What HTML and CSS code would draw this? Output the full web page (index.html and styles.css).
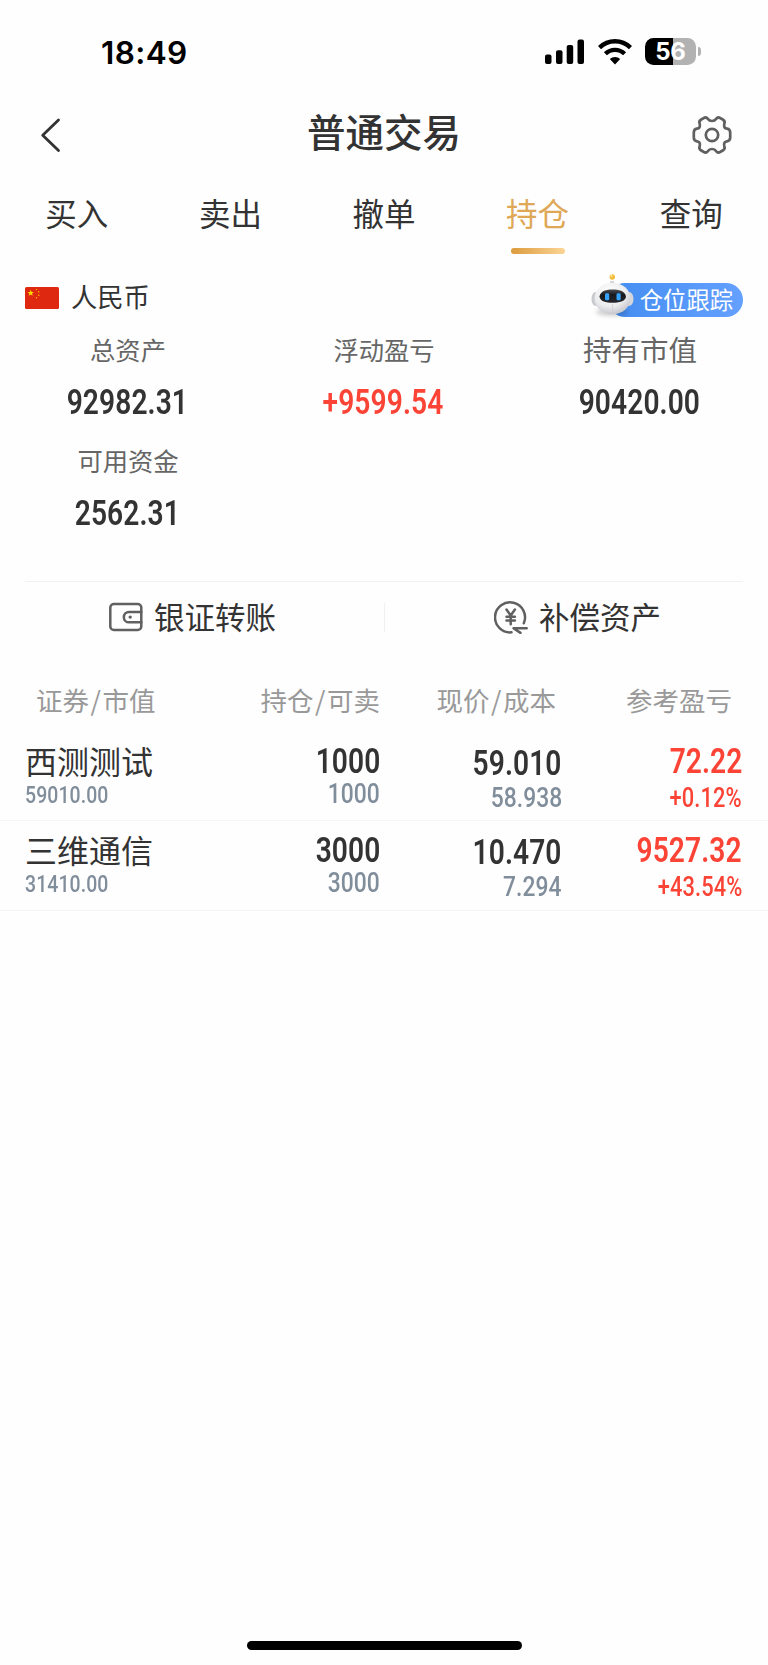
FILE: index.html
```html
<!DOCTYPE html>
<html lang="zh-CN">
<head>
<meta charset="utf-8">
<title>普通交易</title>
<link rel="stylesheet" href="styles.css">
</head>
<body>
<div class="screen">
  <div class="status">
    <span class="time">18:49</span>
    <div class="status-icons">
      <svg class="signal" viewBox="0 0 40 26"><rect x="0" y="15.5" width="6.5" height="9.5" rx="2"/><rect x="11" y="11.3" width="6.5" height="13.700" rx="2"/><rect x="21.7" y="6" width="6.5" height="19" rx="2"/><rect x="32.5" y="0.500" width="6.5" height="24.500" rx="2"/></svg>
      <svg class="wifi" viewBox="0 0 34 26"><path d="M1.500 8.600a22 22 0 0 1 31 0" fill="none" stroke="#000" stroke-width="4.4"/><path d="M7.400 14.800a13.600 13.600 0 0 1 19.200 0" fill="none" stroke="#000" stroke-width="4.2"/><path d="M17 25.4l-5.2-5.3a7.6 7.6 0 0 1 10.4 0z"/></svg>
      <div class="battery"><div class="battery-body">56</div><div class="battery-cap"></div></div>
    </div>
  </div>
  <header class="nav">
    <svg class="back" viewBox="0 0 22 36"><path d="M19.500 3L3.700 18.3L19.500 33.6"/></svg>
    <h1>普通交易</h1>
    <svg class="gear" viewBox="-21 -21 42 42"><path d="M-8.500 -16.800Q-5.800 -18.600 -4 -16Q-2.800 -14 0 -14Q2.800 -14 4 -16Q5.800 -18.600 8.500 -16.800L10.800 -15.500Q13.500 -14 12.300 -11Q11.300 -6.800 15 -6.300Q18.200 -5.800 18.200 -2.500V2.500Q18.200 5.800 15 6.300Q11.300 6.800 12.300 11Q13.500 14 10.800 15.500L8.500 16.800Q5.800 18.600 4 16Q2.800 14 0 14Q-2.800 14 -4 16Q-5.800 18.600 -8.500 16.800L-10.800 15.500Q-13.500 14 -12.300 11Q-11.300 6.800 -15 6.300Q-18.200 5.800 -18.200 2.500V-2.500Q-18.200 -5.800 -15 -6.300Q-11.300 -6.800 -12.300 -11Q-13.500 -14 -10.800 -15.500Z"/><circle r="6.200"/></svg>
  </header>
  <nav class="tabs">
    <span>买入</span><span>卖出</span><span>撤单</span><span class="active">持仓</span><span>查询</span>
  </nav>
  <section class="currency">
    <svg class="flag" viewBox="0 0 34 22"><rect width="34" height="22" rx="1.5" fill="#de2910"/><path fill="#ffde00" d="M5.700 2.700l.850 2.300h2.300L7 6.500l.750 2.300-2.050-1.400-2.050 1.400.750-2.300-1.850-1.500h2.300z"/><g fill="#ffc400"><circle cx="11.5" cy="2.6" r=".7"/><circle cx="13.7" cy="4.8" r=".7"/><circle cx="13.7" cy="8.3" r=".7"/><circle cx="11.5" cy="10.7" r=".7"/></g></svg>
    <span class="currency-name">人民币</span>
    <div class="tracker">
      <span>仓位跟踪</span>
      <svg class="robot" viewBox="0 0 46 48">
        <defs>
          <radialGradient id="head" cx=".42" cy=".3" r=".75"><stop offset="0" stop-color="#fff"/><stop offset=".6" stop-color="#ececee"/><stop offset="1" stop-color="#bfc1c8"/></radialGradient>
          <linearGradient id="visor" x2="0" y2="1"><stop stop-color="#4b4d52"/><stop offset=".4" stop-color="#17191d"/><stop offset="1" stop-color="#26282d"/></linearGradient>
        </defs>
        <ellipse class="shadow" cx="22" cy="40" rx="16" ry="4"/>
        <path d="M19.3 13l1-4h3.6l1.2 4z" fill="#d6d6d8"/>
        <circle cx="22.3" cy="5" r="2.7" fill="#f4bd39"/><circle cx="21.5" cy="4" r="1.1" fill="#ffe9a0"/>
        <ellipse cx="5.5" cy="27" rx="4" ry="7" fill="#c9cacd"/><ellipse cx="39" cy="27" rx="4.500" ry="7" fill="#d5d6da"/>
        <ellipse cx="22.5" cy="26.5" rx="18" ry="15.8" fill="url(#head)"/>
        <path d="M22.5 32v10" stroke="#ccc" stroke-width=".7"/>
        <path d="M9.5 24.5c1-6 7-7 13-7s12.500 1 13.500 7c-.5 5-7 6.300-13.500 6.300s-12.500-1.300-13-6.300z" fill="url(#visor)"/>
        <rect x="15" y="21.300" width="4.200" height="7" rx="1.400" fill="#35a3fb"/><rect x="26.500" y="21.300" width="4.200" height="7" rx="1.400" fill="#35a3fb"/>
      </svg>
    </div>
  </section>
  <section class="stats">
    <div class="stat"><label>总资产</label><b class="num">92982.31</b></div>
    <div class="stat"><label>浮动盈亏</label><b class="num red">+9599.54</b></div>
    <div class="stat"><label class="large">持有市值</label><b class="num">90420.00</b></div>
    <div class="stat"><label>可用资金</label><b class="num">2562.31</b></div>
  </section>
  <section class="actions">
    <div class="action">
      <svg viewBox="0 0 34 34"><rect x="1.300" y="4" width="31" height="26" rx="3.600"/><path d="M32.300 12H20a5 5 0 0 0 0 10.300h12.300"/><circle class="dot" cx="21.200" cy="17.100" r="1.700"/></svg>
      <span>银证转账</span>
    </div>
    <div class="action">
      <svg viewBox="0 0 34 34"><path d="M29.800 23.300A15 15 0 1 0 17.500 32.300M12.500 9.500l4.200 6 4.200-6M12.500 16.800h8.400M12.500 20.600h8.400M16.700 15.500v8.700M32.700 28.300H19.500l7 4.600"/></svg>
      <span>补偿资产</span>
    </div>
  </section>
  <section class="positions">
    <div class="thead"><span>证券<i>/</i>市值</span><span>持仓<i>/</i>可卖</span><span>现价<i>/</i>成本</span><span>参考盈亏</span></div>
    <div class="row">
      <div class="cell name"><strong>西测测试</strong><span class="num tiny">59010.00</span></div>
      <div class="cell qty"><b class="num">1000</b><span class="num small">1000</span></div>
      <div class="cell price"><b class="num">59.010</b><span class="num small">58.938</span></div>
      <div class="cell profit"><b class="num">72.22</b><span class="num small">+0.12%</span></div>
    </div>
    <div class="row">
      <div class="cell name"><strong>三维通信</strong><span class="num tiny">31410.00</span></div>
      <div class="cell qty"><b class="num">3000</b><span class="num small">3000</span></div>
      <div class="cell price"><b class="num">10.470</b><span class="num small">7.294</span></div>
      <div class="cell profit"><b class="num">9527.32</b><span class="num small">+43.54%</span></div>
    </div>
  </section>
  <div class="home-bar"></div>
</div>
</body>
</html>
```
FILE: styles.css
```css
* { box-sizing: border-box; }
body { margin: 0; background: #fefefe; color: #333; font-family: "Noto Sans CJK SC", sans-serif; }
.screen { width: 768px; height: 1665px; display: flex; flex-direction: column; overflow: hidden; }
svg { display: block; flex: none; }

.status { height: 104px; padding: 0 67px 0 101px; display: flex; justify-content: space-between; align-items: center; color: #000; font-family: Inter, sans-serif; }
.time { margin-top: 2px; font-size: 31.500px; font-weight: 600; line-height: 40px; letter-spacing: .4px; }
.status-icons { display: flex; align-items: center; }
.signal { width: 40px; height: 26px; margin-right: 12.500px; }
.wifi { width: 34px; height: 26px; margin-right: 13.500px; }
.battery { display: flex; align-items: center; margin-top: -1px; }
.battery-body { width: 51px; height: 27px; border-radius: 8.500px; background: linear-gradient(90deg, #000 28.500px, #b2b2b2 28.500px); color: #fff; font-size: 24px; line-height: 27px; font-weight: 700; text-align: center; letter-spacing: -.3px; }
.battery-cap { width: 3.500px; height: 9px; margin-left: 1.500px; border-radius: 0 4px 4px 0; background: #b2b2b2; }

.nav { height: 62px; padding: 0 35px 0 39px; display: flex; justify-content: space-between; align-items: center; }
.nav h1 { margin: -10px 0 0 16px; font-size: 38.500px; line-height: 60px; font-weight: 500; }
.back { width: 22px; height: 36px; }
.back path { fill: none; stroke: #333; stroke-width: 2.800; stroke-linecap: round; stroke-linejoin: round; }
.gear { width: 42px; height: 42px; }
.gear * { fill: none; stroke: #606060; stroke-width: 2.700; stroke-linejoin: round; }

.tabs { height: 92px; display: grid; grid-template-columns: repeat(5, 1fr); }
.tabs span { display: flex; flex-direction: column; align-items: center; padding-top: 21px; font-size: 31.500px; line-height: 50px; }
.tabs .active { color: #dfa857; }
.active::after { content: ""; width: 54px; height: 6px; margin-top: 11px; border-radius: 3px; background: linear-gradient(90deg, #dc9b3c, #fbd596); }

.currency { height: 67px; padding: 11px 25px 0; display: flex; align-items: center; }
.flag { width: 34px; height: 22px; margin-top: 1px; }
.currency-name { margin: -2px auto 0 12px; font-size: 26.300px; line-height: 40px; }
.tracker { position: relative; width: 135px; height: 34px; margin-top: 5px; border-radius: 17px; background: linear-gradient(90deg, #438df1, #64a0ff); color: #fff; text-align: right; padding-right: 10px; }
.tracker span { display: block; font-size: 23.300px; line-height: 32px; }
.robot { position: absolute; left: -18px; top: -11px; width: 46px; height: 48px; overflow: visible; }
.shadow { fill: #000; opacity: .18; filter: blur(2px); }

.num { font-family: Roboto, sans-serif; font-weight: 600; font-size: 35px; line-height: 40px; letter-spacing: .1px; display: block; transform: scaleX(.805); }
.red { color: #fb4336; }
.stats { height: 256px; display: grid; grid-template-columns: repeat(3, 256px); grid-auto-rows: 111px; }
.stat { display: flex; flex-direction: column; align-items: center; padding-top: 4px; }
.stat label { height: 54px; font-size: 25.300px; line-height: 40px; color: #666; }
.stat .large { font-size: 28.500px; }
.stat .num { margin-left: -2px; }

.actions { height: 86px; margin: 0 25px; padding-top: 21px; border-top: 1.500px solid #f1f1f1; display: grid; grid-template-columns: 1fr 1fr; }
.action { height: 29px; display: flex; align-items: center; gap: 11px; padding-left: 84px; font-size: 30.500px; line-height: 40px; }
.action + .action { border-left: 1.500px solid #f1f1f1; padding-left: 109px; }
.action svg { width: 34px; height: 34px; margin-top: -1px; }
.action span { margin-top: -4px; }
.action svg * { fill: none; stroke: #606060; stroke-width: 2.500; stroke-linejoin: round; stroke-linecap: round; }
.action svg .dot { fill: #606060; stroke: none; }

.thead { height: 65px; padding: 13px 36px 0; display: grid; grid-template-columns: 160px 184px 176px 1fr; font-size: 26.500px; line-height: 40px; color: #999; }
.thead i { font-style: normal; padding: 0 1.500px; }
.thead span + span { text-align: right; }
.row { height: 89.300px; border-bottom: 1.500px solid #f5f5f5; padding: 0 26px; display: grid; grid-template-columns: 170px 184px 182px 180px; }
.cell { display: flex; flex-direction: column; align-items: flex-end; }
.cell .num { transform-origin: right; line-height: 34px; }
.cell .small { font-size: 27.500px; line-height: 26px; font-weight: 500; color: #808d9b; transform: scaleX(.83); }
.name { align-items: flex-start; padding-top: 5px; }
.name strong { font-weight: 400; font-size: 32px; line-height: 46px; margin-left: -1px; white-space: nowrap; }
.cell .tiny { margin: -1px 0 0 -1px; transform: scaleX(.81); transform-origin: left; font-size: 24px; line-height: 26px; font-weight: 500; color: #808d9b; }
.qty { padding-top: 13px; }
.qty .small { margin-top: 2px; }
.price { padding-top: 15px; }
.price .small { margin-top: 4px; }
.profit { padding-top: 13px; }
.cell.profit .num { color: #fb4336; }
.profit .small { margin-top: 6px; transform: scaleX(.795); }
.home-bar { width: 275px; height: 9px; margin: auto auto 15px; border-radius: 5px; background: #000; }
```
